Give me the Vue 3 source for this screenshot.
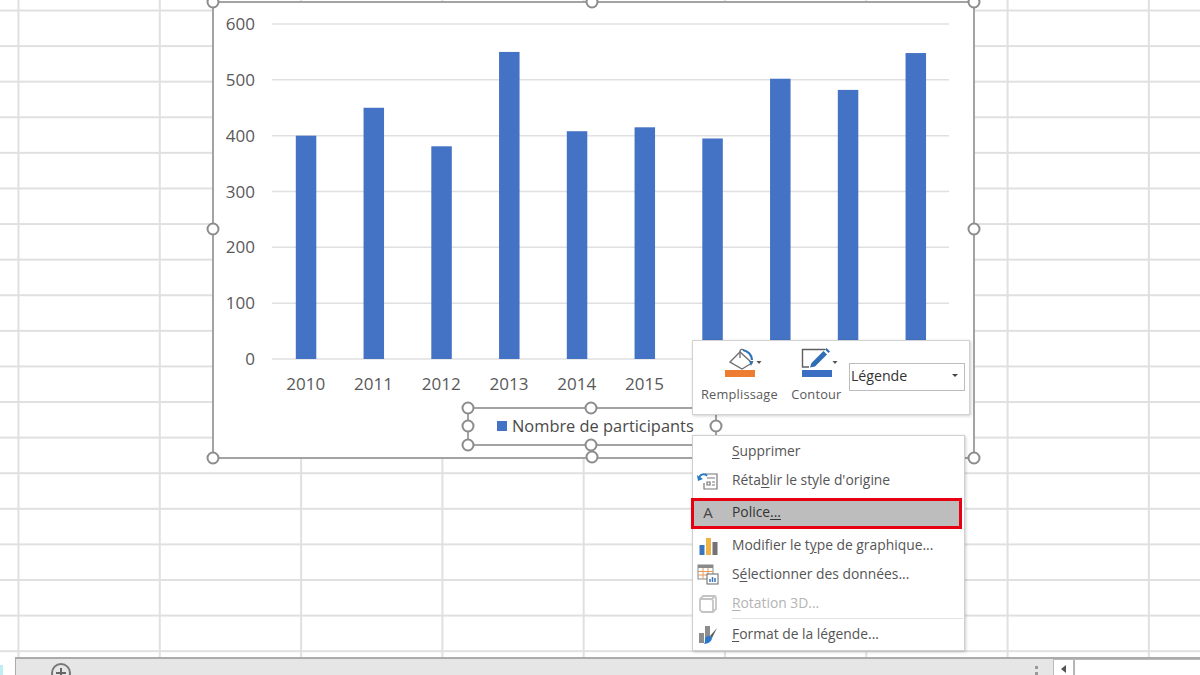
<script setup>
const ticks = [0, 100, 200, 300, 400, 500, 600]
const values = [
  { year: 2010, v: 400 }, { year: 2011, v: 450 }, { year: 2012, v: 381 }, { year: 2013, v: 550 },
  { year: 2014, v: 408 }, { year: 2015, v: 415 }, { year: 2016, v: 395 }, { year: 2017, v: 502 },
  { year: 2018, v: 482 }, { year: 2019, v: 548 }
]
const y = v => 359 - v * 0.5583
const barX = i => 295.8 + i * 67.75
const handles = [
  [213, 2], [592, 2], [974, 2], [213, 229], [974, 229], [213, 458], [592, 457], [974, 458],
  [468, 408], [591, 408], [468, 426], [716, 426], [468, 445], [591, 445]
]
</script>

<template>
  <div class="sheet">
    <div class="grid">
      <svg class="chart" width="1200" height="480" viewBox="0 0 1200 480">
        <rect x="213" y="2" width="761" height="456" fill="#fff" stroke="#a3a3a3" stroke-width="2" />
        <g v-for="t in ticks" :key="t">
          <line x1="272" x2="949" :y1="y(t)" :y2="y(t)" stroke="#e0e0e0" stroke-width="1.5" />
          <text class="axis" x="255" :y="y(t) + 6" text-anchor="end">{{ t }}</text>
        </g>
        <g v-for="(b, i) in values" :key="b.year">
          <rect :x="barX(i)" :y="y(b.v)" width="20.5" :height="359 - y(b.v)" fill="#4472c4" />
          <!-- the later years sit behind the toolbar -->
          <text v-if="i < 6" class="axis" :x="barX(i) + 10" y="390" text-anchor="middle">{{ b.year }}</text>
        </g>
        <path d="M468 408H716M468 445H716M468 408V445" fill="none" stroke="#a3a3a3" stroke-width="2" />
        <path d="M716 408V445" stroke="#a3a3a3" stroke-width="2" />
        <rect x="497" y="421" width="10" height="10" fill="#4472c4" />
        <text class="legend" x="512" y="432">Nombre de participants</text>
        <circle v-for="h in handles" :key="h.join()" :cx="h[0]" :cy="h[1]" r="5.5" fill="#fff" stroke="#8c8c8c" stroke-width="2" />
      </svg>

      <div class="toolbar">
        <div class="tool fill-tool">
          <div class="tool-icon">
            <svg width="44" height="32" viewBox="0 0 44 32">
              <path d="M8 14L18 4 30 15 20 21z" fill="#fff" stroke="#6e6e6e" stroke-width="1.300" />
              <path d="M18 10V3a2 2 0 0 1 3.500-1" fill="none" stroke="#6e6e6e" stroke-width="1.300" />
              <path d="M21 2c5 1 9 5 9 10" fill="none" stroke="#2f74b8" stroke-width="2.200" />
              <path d="M27 13l2 5 2.500-5z" fill="#2f74b8" />
              <path d="M34.500 13h5l-2.500 3z" fill="#555" />
              <rect x="3" y="22" width="30" height="7" fill="#ed7d31" />
            </svg>
          </div>
          <span>Remplissage</span>
        </div>
        <div class="tool">
          <div class="tool-icon">
            <svg width="44" height="32" viewBox="0 0 44 32">
              <path d="M26 1.500H3.500V19H10" fill="none" stroke="#5f5f5f" stroke-width="1.400" />
              <path d="M11 19.500l1.500-4.500 12-12 3.500 3.500-12 12z" fill="#2f6db5" />
              <path d="M26 1.500l1.500-1.500 3.500 3.500-1.500 1.500z" fill="#2f6db5" />
              <path d="M33.500 13h5l-2.500 3z" fill="#555" />
              <rect x="3" y="22" width="30" height="7" fill="#3a6fc4" />
            </svg>
          </div>
          <span>Contour</span>
        </div>
        <div class="select">
          <span>Légende</span>
          <i class="caret"></i>
        </div>
      </div>

      <div class="menu">
        <div class="row"><span class="ico"></span><span class="label"><u>S</u>upprimer</span></div>
        <div class="row">
          <span class="ico">
            <svg width="22" height="20" viewBox="0 0 22 20">
              <path d="M8 3h12v15H7v-6" fill="#fff" stroke="#777" stroke-width="1.200" />
              <path d="M10 11h3v3h-3zM15 11h3M15 14h3M10 7h8" fill="none" stroke="#777" stroke-width="1.200" />
              <path d="M2 7c1-4 6-5 8-2" fill="none" stroke="#2b78c5" stroke-width="1.800" />
              <path d="M0 4l1 6 5-2z" fill="#2b78c5" />
            </svg>
          </span>
          <span class="label">Réta<u>b</u>lir le style d'origine</span>
        </div>
        <div class="row active">
          <span class="ico letter">A</span>
          <span class="label">Police<u>...</u></span>
        </div>
        <div class="row">
          <span class="ico">
            <svg width="20" height="20" viewBox="0 0 20 20">
              <rect x="1.500" y="9" width="5" height="10" fill="#3a76bd" />
              <rect x="8" y="2" width="5" height="17" fill="#eeb446" />
              <rect x="14.500" y="6" width="5" height="13" fill="#737373" />
            </svg>
          </span>
          <span class="label">Modifier le t<u>y</u>pe de graphique...</span>
        </div>
        <div class="row">
          <span class="ico">
            <svg width="22" height="21" viewBox="0 0 22 21">
              <rect x="1" y="1" width="15" height="14" fill="#fff" stroke="#8a8a8a" />
              <rect x="1" y="1" width="15" height="3" fill="#8a8a8a" />
              <path d="M1 7.500h15M1 11h15M6 4v11M11 4v11" stroke="#e89a5c" fill="none" />
              <rect x="10" y="10" width="11" height="10" fill="#fff" stroke="#666" />
              <path d="M13 18v-3M15.500 18v-5M18 18v-4" stroke="#3a76bd" stroke-width="1.500" />
            </svg>
          </span>
          <span class="label">S<u>é</u>lectionner des données...</span>
        </div>
        <div class="row disabled">
          <span class="ico">
            <svg width="20" height="20" viewBox="0 0 20 20">
              <path d="M5 2h12l1 2v11l-3 3H4l-2-2V5z" fill="#fff" stroke="#c4c4c4" stroke-width="1.800" />
              <path d="M3 5h11l1 2v11M14 5l3-3" fill="none" stroke="#c4c4c4" stroke-width="1.800" />
            </svg>
          </span>
          <span class="label"><u>R</u>otation 3D...</span>
        </div>
        <div class="sep"></div>
        <div class="row">
          <span class="ico">
            <svg width="20" height="20" viewBox="0 0 20 20">
              <rect x="1" y="8" width="5" height="10" fill="#8c8c8c" />
              <rect x="7" y="1" width="5" height="12" fill="#8c8c8c" />
              <path d="M19 3l-7 8 2 2z" fill="#5e5e5e" />
              <path d="M7 13c3-3 7-2 7 0 0 3-4 6-8 6 1-1 1-3 1-6z" fill="#2b78c5" />
            </svg>
          </span>
          <span class="label"><u>F</u>ormat de la légende...</span>
        </div>
      </div>
    </div>

    <div class="tabs">
      <div class="add"></div>
      <div class="dots"><b></b><b></b></div>
      <div class="scroll">
        <div class="arrow"><i></i></div>
        <div class="track"></div>
      </div>
    </div>
  </div>
</template>

<style scoped>
.sheet { width:1200px; height:675px; overflow:hidden; display:flex; flex-direction:column; background:#fff; font-family:"Open Sans","Liberation Sans",sans-serif; color:#444; position:relative; }
.sheet::before { content:""; position:absolute; left:0; bottom:0; width:3px; height:10px; background:#bdeef2; }
.grid { position:relative; height:657px; flex:none; background-color:#fff;
  background-image:linear-gradient(to right,#e0e0e0 1.5px,transparent 1.5px),linear-gradient(to bottom,#e0e0e0 1.5px,transparent 1.5px);
  background-size:141.3px 100%,100% 35.6px; background-position:17.500px 0,0 9.500px; }
.chart { position:absolute; left:0; top:0; overflow:visible; }
.axis { font-family:"Open Sans","Liberation Sans",sans-serif; font-size:17px; fill:#595959; }
.legend { font-family:"Open Sans","Liberation Sans",sans-serif; font-size:16.400px; fill:#4a4a4a; }

.toolbar { position:absolute; left:692px; top:340px; width:278px; height:75px; box-sizing:border-box; background:#fff; border:1px solid #d2d2d2; box-shadow:1px 1px 3px rgba(0,0,0,.2); display:flex; align-items:flex-start; padding:4px 4px 0 8px; gap:12px; }
.tool { display:flex; flex-direction:column; align-items:center; font-size:12.800px; color:#5a5a5a; letter-spacing:.2px; white-space:nowrap; }
.tool-icon { height:32px; margin:3px 0 5px 9px; }
.select { width:117px; height:28px; box-sizing:border-box; margin:18px 0 0 -6px; border:1px solid #bdbdbd; display:flex; align-items:center; justify-content:space-between; padding:0 6px 3px 1px; font-size:14.200px; color:#333; }
.caret { width:0; height:0; border-left:3px solid transparent; border-right:3px solid transparent; border-top:3px solid #444; }

.menu { position:absolute; left:692px; top:435px; width:273px; height:216px; box-sizing:border-box; background:#fff; border:1px solid #cfcfcf; box-shadow:1px 1px 3px rgba(0,0,0,.2); padding:1px 0; font-size:13.850px; color:#555; }
.row { height:29px; display:flex; align-items:center; white-space:nowrap; }
.label { margin-bottom:2px; }
.ico { width:39px; flex:none; display:flex; justify-content:center; padding-right:9px; box-sizing:border-box; align-items:center; }
.row:nth-child(2) { margin-bottom:3px; }
.active { height:31px; box-sizing:border-box; width:271px; margin:0 0 2px -2px; border:3px solid #e60012; background:#bdbdbd; color:#333; }
.active .ico { width:38px; padding-right:10px; }
.active .label { margin-bottom:4px; }
.letter { font-size:15px; color:#444; margin-bottom:4px; }
.disabled { color:#b4b4b4; }
.sep { height:1px; margin:0 1px 1px 39px; background:#e2e2e2; }

.tabs { flex:1; background:#e6e6e6; margin-left:15px; border-top:2px solid #ababab; border-left:1px solid #ababab; position:relative; display:flex; align-items:flex-start; }
.add { width:20px; height:20px; box-sizing:border-box; margin:4px 0 0 35px; border:2px solid #777; border-radius:50%; position:relative; flex:none; }
.add::before { content:""; position:absolute; left:3px; top:7px; width:10px; height:2px; background:#666; }
.add::after { content:""; position:absolute; left:7px; top:3px; width:2px; height:10px; background:#666; }
.dots { margin:7px 0 0 964px; display:flex; flex-direction:column; gap:3px; }
.dots b { width:3px; height:3px; background:#999; }
.scroll { margin-left:15px; flex:1; height:18px; display:flex; }
.arrow { width:20px; height:100%; box-sizing:border-box; background:#fff; border-left:1px solid #bbb; border-top:1px solid #bbb; display:flex; justify-content:center; align-items:center; }
.arrow i { width:0; height:0; border-top:4px solid transparent; border-bottom:4px solid transparent; border-right:5px solid #555; }
.track { flex:1; background:#fff; border-left:2px solid #b5b5b5; border-top:1px solid #bbb; }
u { text-underline-offset:2px; }
</style>
